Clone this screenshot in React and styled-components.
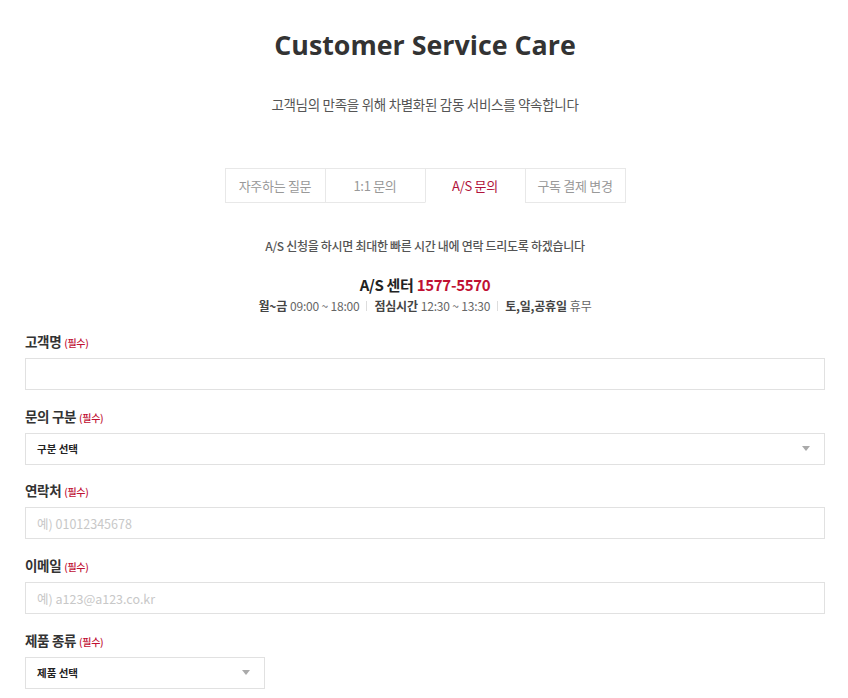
import React from 'react';
import styled, { createGlobalStyle } from 'styled-components';

const GlobalStyle = createGlobalStyle`
  body {
    margin: 0;
    background: #fff;
    font-family: "Noto Sans CJK KR", "Noto Sans", sans-serif;
    color: #333;
  }
`;

const tabs = ['자주하는 질문', '1:1 문의', 'A/S 문의', '구독 결제 변경'];

const fields = [
  { label: '고객명', type: 'input' },
  { label: '문의 구분', type: 'select', value: '구분 선택' },
  { label: '연락처', type: 'input', placeholder: '예) 01012345678' },
  { label: '이메일', type: 'input', placeholder: '예) a123@a123.co.kr' },
  { label: '제품 종류', type: 'select', value: '제품 선택', narrow: true },
];

const App = () => {
  return (
    <>
      <GlobalStyle />
      <Page>
        <Title>Customer Service Care</Title>
        <Subtitle>고객님의 만족을 위해 차별화된 감동 서비스를 약속합니다</Subtitle>
        <Tabs>
          {tabs.map((t) => (
            <Tab key={t} active={t === 'A/S 문의'}>{t}</Tab>
          ))}
        </Tabs>
        <Notice>A/S 신청을 하시면 최대한 빠른 시간 내에 연락 드리도록 하겠습니다</Notice>
        <Center>
          A/S 센터 <Phone>1577-5570</Phone>
        </Center>
        <Hours>
          <b>월~금</b> 09:00 ~ 18:00<Divider />
          <b>점심시간</b> 12:30 ~ 13:30<Divider />
          <b>토,일,공휴일</b> 휴무
        </Hours>
        <Form>
          {fields.map((f) => (
            <Field key={f.label}>
              <Label>
                {f.label} <Required>(필수)</Required>
              </Label>
              {f.type === 'input' ? (
                <Input placeholder={f.placeholder} />
              ) : (
                <Select narrow={f.narrow}>
                  <span>{f.value}</span>
                  <Arrow />
                </Select>
              )}
            </Field>
          ))}
        </Form>
      </Page>
    </>
  );
};

const Page = styled.div`
  padding: 28px 23px 0 25px;
  display: flex;
  flex-direction: column;
  align-items: center;
`;

const Title = styled.h1`
  margin: 0;
  font-family: "Open Sans", sans-serif;
  font-weight: 700;
  font-size: 26.8px;
  line-height: 34px;
  color: #333;
`;

const Subtitle = styled.p`
  margin: 33px 0 0;
  font-size: 13.5px;
  line-height: 18px;
  color: #555;
  letter-spacing: -0.3px;
`;

const Tabs = styled.div`
  margin-top: 55px;
  display: flex;
  border-top: 1px solid #e8e8e8;
`;

const Tab = styled.div`
  width: 99px;
  height: 33px;
  display: flex;
  align-items: center;
  justify-content: center;
  font-size: 13px;
  letter-spacing: -0.3px;
  color: ${(p) => (p.active ? '#b0123a' : '#999')};
  border-left: 1px solid #e8e8e8;
  border-bottom: 1px solid ${(p) => (p.active ? 'transparent' : '#e8e8e8')};
  &:last-child {
    border-right: 1px solid #e8e8e8;
  }
`;

const Notice = styled.p`
  margin: 35px 0 0;
  font-size: 12px;
  line-height: 16px;
  color: #555;
  font-weight: 500;
  letter-spacing: -0.3px;
`;

const Center = styled.div`
  margin-top: 22px;
  font-size: 15px;
  line-height: 18px;
  font-weight: 700;
  color: #222;
  letter-spacing: -0.3px;
`;

const Phone = styled.span`
  color: #c01033;
`;

const Hours = styled.div`
  margin-top: 4px;
  font-size: 12px;
  line-height: 16px;
  color: #666;
  display: flex;
  align-items: center;
  letter-spacing: -0.2px;
  b {
    color: #444;
    font-weight: 700;
    margin-right: 3px;
  }
`;

const Divider = styled.i`
  display: inline-block;
  width: 1px;
  height: 10px;
  background: #ddd;
  margin: 0 7px;
`;

const Form = styled.div`
  align-self: stretch;
  margin-top: 17px;
  display: flex;
  flex-direction: column;
  gap: 15.7px;
`;

const Field = styled.div`
  display: flex;
  flex-direction: column;
`;

const Label = styled.div`
  font-size: 13.5px;
  line-height: 20px;
  font-weight: 700;
  color: #333;
  margin-bottom: 5px;
  letter-spacing: -0.3px;
`;

const Required = styled.span`
  font-size: 10px;
  font-weight: 500;
  color: #c01033;
`;

const Input = styled.input`
  box-sizing: border-box;
  width: 100%;
  height: 32px;
  border: 1px solid #e1e1e1;
  padding: 0 11px;
  font-family: inherit;
  font-size: 12.5px;
  outline: none;
  &::placeholder {
    color: #c8c8c8;
  }
`;

const Select = styled.div`
  box-sizing: border-box;
  width: ${(p) => (p.narrow ? '240px' : '100%')};
  height: 32px;
  border: 1px solid #e1e1e1;
  padding: 0 14px 0 11px;
  display: flex;
  align-items: center;
  justify-content: space-between;
  font-size: 10.5px;
  font-weight: 700;
  color: #222;
`;

const Arrow = styled.span`
  width: 0;
  height: 0;
  border-left: 4px solid transparent;
  border-right: 4px solid transparent;
  border-top: 5px solid #aaa;
`;

export default App;
